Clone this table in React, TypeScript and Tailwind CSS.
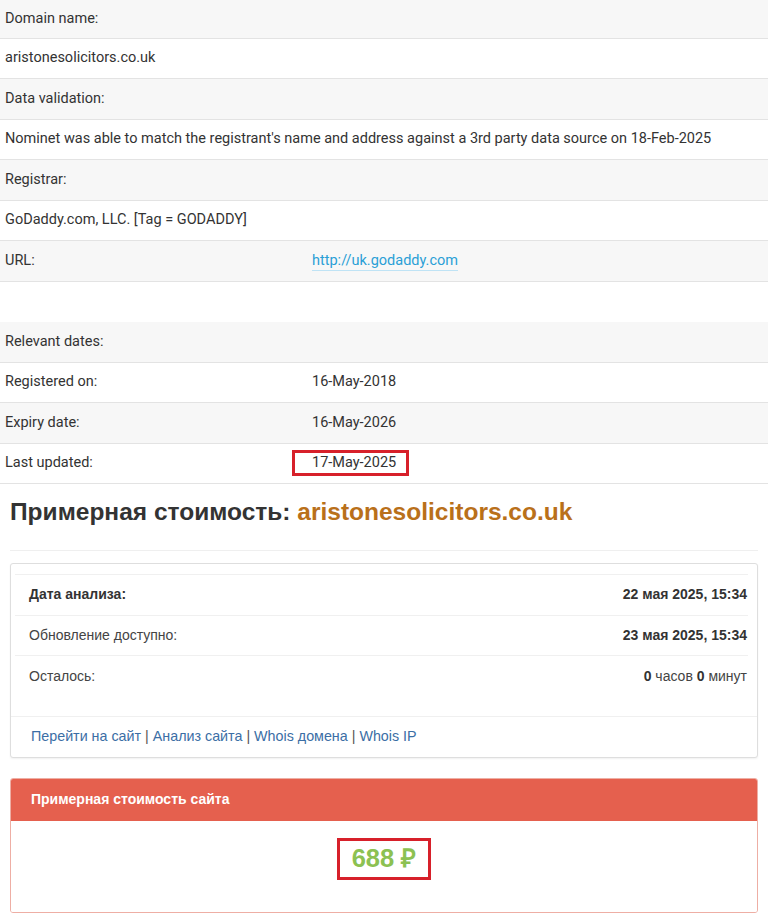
import React from "react";

const roboto = { fontFamily: "Roboto, 'Liberation Sans', sans-serif" };

type Row = { label: string; value?: React.ReactNode; gray: boolean };

function WhoisRow({ label, value, gray }: Row) {
  return (
    <div
      className={`flex h-[40.5px] items-center border-b border-[#e3e3e3] text-[14.5px] text-[#333] ${
        gray ? "bg-[#f7f7f7]" : "bg-white"
      }`}
    >
      <div className="w-[312px] shrink-0 pl-[5px] whitespace-nowrap">{label}</div>
      {value !== undefined && <div className="whitespace-nowrap">{value}</div>}
    </div>
  );
}

function FullRow({ text, gray, first }: { text: string; gray: boolean; first?: boolean }) {
  return (
    <div
      className={`flex items-center border-b border-[#e3e3e3] pl-[5px] text-[14.5px] text-[#333] whitespace-nowrap ${
        first ? "h-[38.5px]" : "h-[40.5px]"
      } ${gray ? "bg-[#f7f7f7]" : "bg-white"}`}
    >
      {text}
    </div>
  );
}

export default function App() {
  return (
    <div className="w-[768px] h-[913px] overflow-hidden bg-white">
      {/* whois table */}
      <div style={roboto}>
        <FullRow text="Domain name:" gray first />
        <FullRow text="aristonesolicitors.co.uk" gray={false} />
        <FullRow text="Data validation:" gray />
        <FullRow
          text="Nominet was able to match the registrant's name and address against a 3rd party data source on 18-Feb-2025"
          gray={false}
        />
        <FullRow text="Registrar:" gray />
        <FullRow text="GoDaddy.com, LLC. [Tag = GODADDY]" gray={false} />
        <WhoisRow
          label="URL:"
          gray
          value={
            <a className="border-b border-[#bfe3f5] pb-[1px] text-[#2a9fd6]">http://uk.godaddy.com</a>
          }
        />
        <div className="h-[40.5px] bg-white" />
        <FullRow text="Relevant dates:" gray />
        <WhoisRow label="Registered on:" value="16-May-2018" gray={false} />
        <WhoisRow label="Expiry date:" value="16-May-2026" gray />
        <WhoisRow
          label="Last updated:"
          gray={false}
          value={
            <span className="relative inline-block">
              17-May-2025
              <span className="absolute -left-[20px] -right-[13px] -top-[2px] -bottom-[2px] border-[3px] border-[#d7202a]" />
            </span>
          }
        />
      </div>

      {/* estimate */}
      <div className="px-[10px] text-[#333]" style={{ fontFamily: "'Liberation Sans', Arial, sans-serif" }}>
        <h1 className="mt-[14px] text-[24.5px] leading-[27px] font-bold whitespace-nowrap text-[#333]">
          Примерная стоимость: <span className="text-[#b9701a]">aristonesolicitors.co.uk</span>
        </h1>
        <div className="mt-[25px] border-t border-[#efefef]" />

        <div className="mt-[12px] rounded-[3px] border border-[#dedede] bg-white shadow-[0_1px_2px_rgba(0,0,0,0.06)]">
          <div className="pl-[4px] pr-[9px] pt-[10px]">
            <div className="border-t border-[#f0f0f0]">
              <div className="flex h-[40.5px] items-center justify-between border-b border-[#f0f0f0] pl-[14px] pr-[1px] text-[14px]">
                <span className="font-bold">Дата анализа:</span>
                <span className="font-bold">22 мая 2025, 15:34</span>
              </div>
              <div className="flex h-[40.5px] items-center justify-between border-b border-[#f0f0f0] pl-[14px] pr-[1px] text-[14px]">
                <span className="text-[#444]">Обновление доступно:</span>
                <span className="font-bold">23 мая 2025, 15:34</span>
              </div>
              <div className="flex h-[40.5px] items-center justify-between pl-[14px] pr-[1px] text-[14px]">
                <span className="text-[#444]">Осталось:</span>
                <span className="text-[#444]">
                  <b className="text-[#333]">0</b> часов <b className="text-[#333]">0</b> минут
                </span>
              </div>
            </div>
          </div>
          <div className="mt-[19px] flex h-[41px] items-center border-t border-[#f0f0f0] pl-[20px] text-[14.3px] text-[#555] whitespace-pre">
            <a className="text-[#3b6ea5]">Перейти на сайт</a>
            <span> | </span>
            <a className="text-[#3b6ea5]">Анализ сайта</a>
            <span> | </span>
            <a className="text-[#3b6ea5]">Whois домена</a>
            <span> | </span>
            <a className="text-[#3b6ea5]">Whois IP</a>
          </div>
        </div>

        <div className="mt-[20px] overflow-hidden rounded-[3px] border border-[#eeaea4]">
          <div className="-mx-px -mt-px flex h-[43px] items-center bg-[#e5604e] pl-[21px] text-[14px] font-bold text-white">
            Примерная стоимость сайта
          </div>
          <div className="flex h-[91px] justify-center bg-white pt-[17px]">
            <div className="flex h-[42px] items-center border-[3px] border-[#d7202a] px-[12px] text-[25.5px] font-bold text-[#8cc152]">
              688 ₽
            </div>
          </div>
        </div>
      </div>
    </div>
  );
}
